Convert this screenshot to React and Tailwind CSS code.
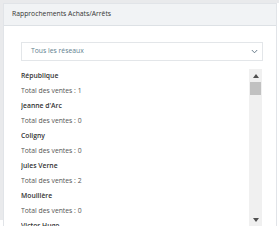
import React from 'react';

const stops = [
  { name: 'République', total: 1 },
  { name: "Jeanne d'Arc", total: 0 },
  { name: 'Coligny', total: 0 },
  { name: 'Jules Verne', total: 2 },
  { name: 'Mouillère', total: 0 },
];

function Scrollbar() {
  return (
    <div className="w-[13px] shrink-0 bg-[#f0f0f0] flex flex-col items-center">
      <div className="h-[13px] flex items-center justify-center">
        <div className="w-0 h-0 border-l-[3px] border-r-[3px] border-b-[4px] border-l-transparent border-r-transparent border-b-[#505050]" />
      </div>
      <div className="w-[11px] h-[13px] bg-[#c1c1c1]" />
      <div className="flex-1" />
      <div className="h-[13px] flex items-center justify-center">
        <div className="w-0 h-0 border-l-[3px] border-r-[3px] border-t-[4px] border-l-transparent border-r-transparent border-t-[#505050]" />
      </div>
    </div>
  );
}

export default function App() {
  return (
    <div className="w-[279px] h-[242px] bg-white overflow-hidden antialiased" style={{ fontFamily: '"Open Sans", sans-serif' }}>
      <div className="h-[3px] bg-[#e9eaec]" />
      <div className="flex">
        <div className="w-[3px] h-[217px] bg-[#e9eaec] shrink-0" />
        <div className="w-[274px] border-t border-x border-[#e1e4e8] bg-white">
          <div className="h-[22px] bg-[#f1f3f5] border-b border-[#dde1e5] flex items-center px-[8px] text-[6.8px] text-[#333333]">
            Rapprochements Achats/Arrêts
          </div>
          <div className="pl-[17px] pr-[13px] pt-[16px]">
            <div className="h-[19px] border border-[#e3e6e9] flex items-center justify-between pl-[9px] pr-[4px]">
              <span className="text-[6.8px] text-[#5f7f8f]">Tous les réseaux</span>
              <svg width="7" height="5" viewBox="0 0 7 5" fill="none">
                <path d="M0.8 1 L3.5 3.8 L6.2 1" stroke="#5a6f80" strokeWidth="0.9" />
              </svg>
            </div>
            <div className="flex mt-[8px] h-[157px] pr-[1px]">
              <div className="flex-1 overflow-hidden">
                {stops.map(s => (
                  <div key={s.name}>
                    <div className="h-[15px] flex items-center text-[6.8px] font-semibold text-[#333333]">{s.name}</div>
                    <div className="h-[15px] flex items-center text-[6.8px] text-[#555555]">{`Total des ventes : ${s.total}`}</div>
                  </div>
                ))}
                <div className="h-[7px] overflow-hidden">
                  <div className="h-[15px] flex items-center text-[6.8px] font-semibold text-[#333333]">Victor Hugo</div>
                </div>
              </div>
              <Scrollbar />
            </div>
          </div>
        </div>
      </div>
    </div>
  );
}
